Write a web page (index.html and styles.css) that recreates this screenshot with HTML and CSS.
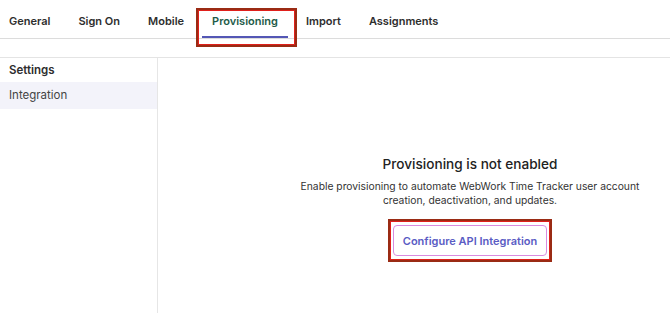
FILE: index.html
```html
<!DOCTYPE html>
<html>
<head>
<meta charset="utf-8">
<link rel="stylesheet" href="styles.css">
</head>
<body>
<nav class="tabs">
  <a class="tab">General</a>
  <a class="tab">Sign On</a>
  <a class="tab">Mobile</a>
  <a class="tab active">Provisioning<span class="mark mark-tab"></span></a>
  <a class="tab">Import</a>
  <a class="tab">Assignments</a>
</nav>
<div class="spacer"></div>
<div class="layout">
  <aside class="sidebar">
    <div class="side-title">Settings</div>
    <div class="side-item selected">Integration</div>
  </aside>
  <main class="main">
    <div class="empty">
      <h2 class="empty-title">Provisioning is not enabled</h2>
      <p class="empty-text"><span class="line">Enable provisioning to automate WebWork Time Tracker user account</span> <span class="line">creation, deactivation, and updates.</span></p>
      <div class="btn-wrap">
        <button class="btn">Configure API Integration</button>
        <span class="mark mark-btn"></span>
      </div>
    </div>
  </main>
</div>
</body>
</html>
```
FILE: styles.css
```css
* { box-sizing: border-box; }
html, body { margin: 0; padding: 0; background: #fff; }
body {
  font-family: Inter, "Noto Sans", "Liberation Sans", sans-serif;
  color: #2b2b2b;
  width: 670px;
  height: 313px;
  overflow: hidden;
}
.tabs {
  display: flex;
  gap: 8px;
  height: 39px;
  border-bottom: 1px solid #dcdcdc;
  margin-left: -1px;
}
.tab {
  position: relative;
  display: flex;
  align-items: center;
  padding: 4px 10px 0;
  height: 38px;
  font-size: 11px;
  font-weight: 600;
  color: #2e2e2e;
}
.tab.active {
  color: #1e5b49;
}
.tab.active::after {
  content: "";
  position: absolute;
  left: 0;
  right: 0;
  bottom: 0;
  height: 2px;
  background: #5457b5;
}
.mark {
  position: absolute;
  border: 2px solid #9a2b14;
  box-shadow: inset 0 0 0 1px #e0201c;
  pointer-events: none;
}
.mark-tab {
  left: -6px;
  top: 8px;
  right: -9px;
  height: 39px;
  z-index: 2;
}
.spacer {
  height: 19px;
  border-bottom: 1px solid #e4e4e4;
}
.layout {
  display: flex;
  height: 255px;
}
.sidebar {
  width: 158px;
  border-right: 1px solid #e6e6e6;
  padding-top: 3px;
}
.side-title {
  padding-left: 9px;
  height: 18px;
  line-height: 18px;
  font-size: 11.5px;
  font-weight: 600;
  color: #2e2e2e;
}
.side-item {
  margin-top: 3px;
  height: 27px;
  line-height: 27px;
  padding-left: 9px;
  font-size: 11.5px;
  color: #444;
}
.side-item.selected {
  background: #f3f3fa;
}
.main {
  flex: 1;
  padding-left: 112px;
  padding-top: 96px;
}
.empty {
  display: flex;
  flex-direction: column;
  align-items: center;
  text-align: center;
}
.empty-title {
  margin: 0;
  font-size: 13.6px;
  font-weight: 500;
  line-height: 20px;
  color: #222;
}
.empty-text {
  margin: 5px 0 0;
  font-size: 10.3px;
  line-height: 14px;
  color: #333;
}
.line { display: block; white-space: nowrap; }
.btn-wrap {
  position: relative;
  margin-top: 18px;
}
.btn {
  font-family: inherit;
  font-size: 11px;
  font-weight: 600;
  color: #5a5cc4;
  background: #fff;
  border: 1px solid #d98be0;
  border-radius: 4px;
  height: 31px;
  padding: 0 9px;
  cursor: pointer;
}
.mark-btn {
  left: -5px;
  top: -6px;
  right: -5px;
  bottom: -6px;
}
```
